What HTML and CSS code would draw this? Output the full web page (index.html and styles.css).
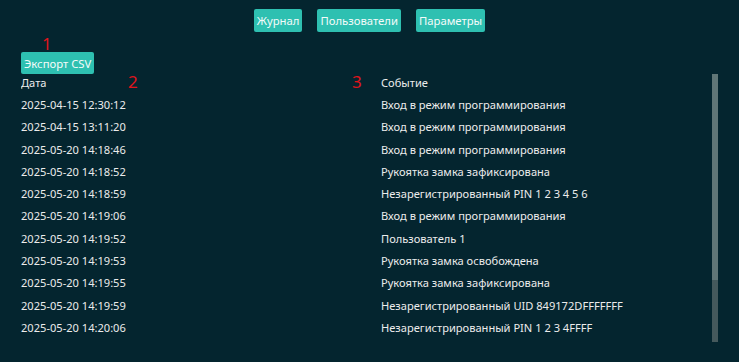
FILE: index.html
```html
<!DOCTYPE html>
<html>
  <head>
    <title>Журнал событий</title>
    <link rel="stylesheet" href="styles.css">
  </head>
  <body>
    <div id="tabButtons">
      <button class="tab-button">Журнал</button>
      <button class="tab-button">Пользователи</button>
      <button class="tab-button">Параметры</button>
    </div>

    <div id="logPanel">
      <div class="export-row">
        <span class="marker marker-1">1</span>
        <button class="tab-button export-button">Экспорт CSV</button>
      </div>

      <div class="log-frame">
        <div class="log-scroll">
          <span class="marker marker-2">2</span>
          <span class="marker marker-3">3</span>
          <table class="log-table">
            <thead>
              <tr><th>Дата</th><th>Событие</th></tr>
            </thead>
            <tbody>
              <tr><td>2025-04-15 12:30:12</td><td>Вход в режим программирования</td></tr>
              <tr><td>2025-04-15 13:11:20</td><td>Вход в режим программирования</td></tr>
              <tr><td>2025-05-20 14:18:46</td><td>Вход в режим программирования</td></tr>
              <tr><td>2025-05-20 14:18:52</td><td>Рукоятка замка зафиксирована</td></tr>
              <tr><td>2025-05-20 14:18:59</td><td>Незарегистрированный PIN 1 2 3 4 5 6</td></tr>
              <tr><td>2025-05-20 14:19:06</td><td>Вход в режим программирования</td></tr>
              <tr><td>2025-05-20 14:19:52</td><td>Пользователь 1</td></tr>
              <tr><td>2025-05-20 14:19:53</td><td>Рукоятка замка освобождена</td></tr>
              <tr><td>2025-05-20 14:19:55</td><td>Рукоятка замка зафиксирована</td></tr>
              <tr><td>2025-05-20 14:19:59</td><td>Незарегистрированный UID 849172DFFFFFFF</td></tr>
              <tr><td>2025-05-20 14:20:06</td><td>Незарегистрированный PIN 1 2 3 4FFFF</td></tr>
            </tbody>
          </table>
        </div>
        <div class="scrollbar">
          <div class="scrollbar-thumb"></div>
        </div>
      </div>
    </div>
  </body>
</html>
```

FILE: styles.css
```css
body {
  margin: 0;
  background: #04252f;
  color: #ececec;
  font-family: 'Noto Sans', 'Open Sans', sans-serif;
  font-size: 11.1px;
  height: 362px;
  overflow: hidden;
}

#tabButtons {
  display: flex;
  justify-content: center;
  gap: 15px;
  padding-top: 9px;
}
.tab-button {
  height: 23px;
  padding: 0 3px;
  border: none;
  border-radius: 2px;
  background: #2ec0b1;
  color: #f4fbfa;
  font-family: inherit;
  font-size: 11.3px;
  cursor: pointer;
}

#logPanel {
  padding-left: 21px;
  padding-right: 21px;
}
.export-row {
  position: relative;
  padding-top: 20px;
}
.export-button {
  height: 22px;
}

.marker {
  position: absolute;
  color: #e0141c;
  font-size: 17px;
  line-height: 1;
}
.marker-1 { left: 21px; top: 3px; }
.marker-2 { left: 107px; top: 2px; }
.marker-3 { left: 331px; top: 2px; }

.log-frame {
  display: flex;
  gap: 12px;
  margin-top: -3px;
}
.log-scroll {
  position: relative;
  flex: 1;
  height: 271px;
  overflow: hidden;
}
.scrollbar {
  display: flex;
  flex-direction: column;
  width: 6px;
  height: 268px;
  margin-top: 3px;
  background: #45595c;
}
.scrollbar-thumb {
  height: 206px;
  background: #607677;
}

.log-table {
  border-collapse: collapse;
  width: 100%;
}
.log-table th,
.log-table td {
  padding: 0;
  height: 22.3px;
  text-align: left;
  font-weight: normal;
  white-space: nowrap;
}
.log-table th:first-child,
.log-table td:first-child {
  width: 360px;
}
```
